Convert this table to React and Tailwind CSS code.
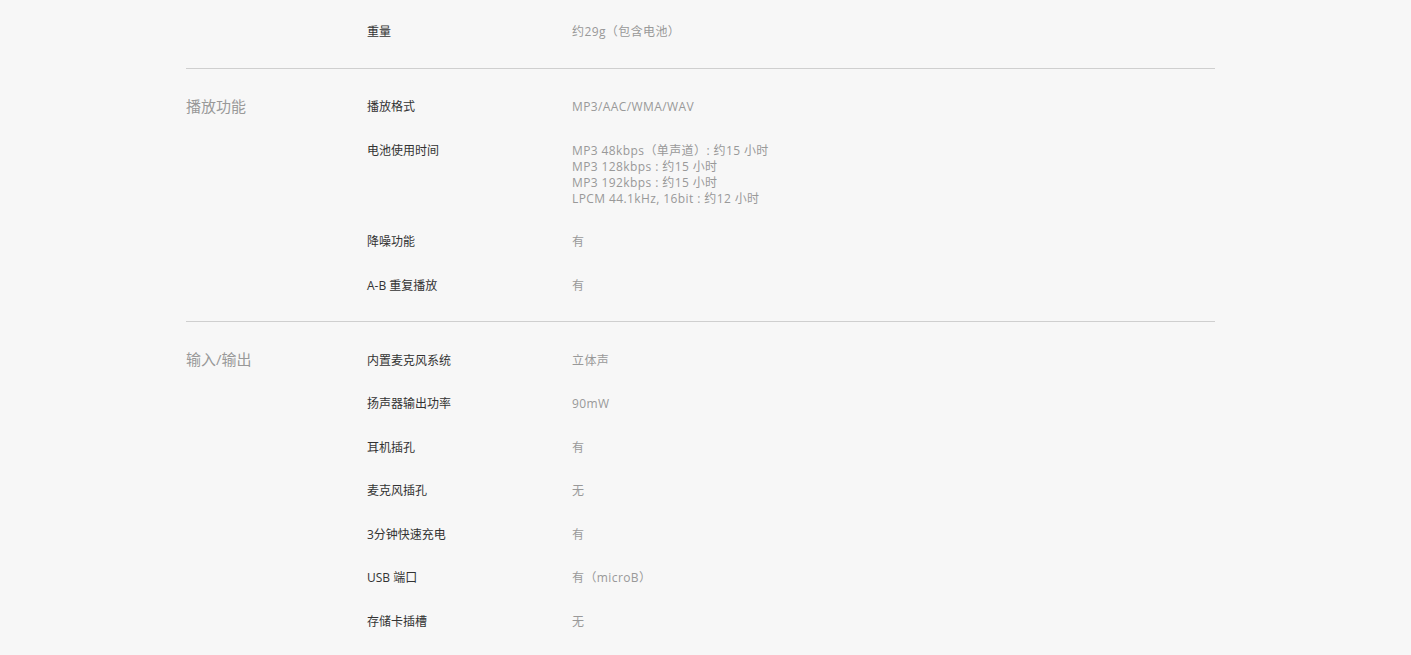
const SECTIONS = [
  {
    title: '',
    rows: [['重量', ['约29g（包含电池）']]],
  },
  {
    title: '播放功能',
    rows: [
      ['播放格式', ['MP3/AAC/WMA/WAV']],
      [
        '电池使用时间',
        [
          'MP3 48kbps（单声道）: 约15 小时',
          'MP3 128kbps : 约15 小时',
          'MP3 192kbps : 约15 小时',
          'LPCM 44.1kHz, 16bit : 约12 小时',
        ],
      ],
      ['降噪功能', ['有']],
      ['A-B 重复播放', ['有']],
    ],
  },
  {
    title: '输入/输出',
    rows: [
      ['内置麦克风系统', ['立体声']],
      ['扬声器输出功率', ['90mW']],
      ['耳机插孔', ['有']],
      ['麦克风插孔', ['无']],
      ['3分钟快速充电', ['有']],
      ['USB 端口', ['有（microB）']],
      ['存储卡插槽', ['无']],
    ],
    last: true,
  },
]

export default function App() {
  return (
    <div
      className="min-h-screen bg-[#f7f7f7] pt-[10.5px] overflow-hidden"
      style={{ fontFamily: '"Open Sans", "Noto Sans CJK SC", sans-serif' }}
    >
      <div className="ml-[186px] w-[1029px]">
        {SECTIONS.map((s, i) => (
          <div
            key={i}
            className={`flex ${i === 0 ? 'pb-[13.5px]' : 'pt-[17px] pb-[13.5px]'} ${s.last ? '' : 'border-b border-[#cfcfcf]'}`}
          >
            <div className="w-[181px] shrink-0 pt-[10px] text-[15px] leading-[20px] text-[#999]">
              {s.title}
            </div>
            <div className="flex-1">
              {s.rows.map(([label, vals]) => (
                <div key={label} className="flex py-[13.75px] text-[12px] leading-[16px]">
                  <div className="w-[205px] shrink-0 text-[#333]">{label}</div>
                  <div className="text-[#999] tracking-[0.4px]">
                    {vals.map(v => (
                      <div key={v}>{v}</div>
                    ))}
                  </div>
                </div>
              ))}
            </div>
          </div>
        ))}
      </div>
    </div>
  )
}
